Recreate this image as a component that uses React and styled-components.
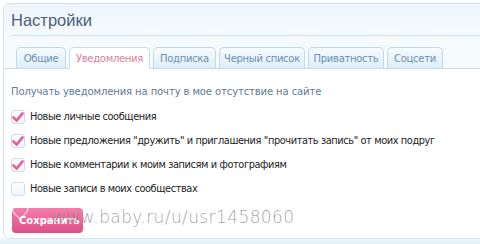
import React, { useState } from 'react';
import styled, { createGlobalStyle } from 'styled-components';

const GlobalStyle = createGlobalStyle`
  html, body {
    margin: 0;
    padding: 0;
    background: #ffffff;
    width: 480px;
    height: 244px;
    overflow: hidden;
  }
  body {
    font-family: Tahoma, "DejaVu Sans", sans-serif;
  }
`;

const Page = styled.div`
  position: relative;
  width: 480px;
  height: 244px;
  padding: 3px 0 0 3px;
  box-sizing: border-box;
  background: linear-gradient(to bottom, #ffffff 0, #ffffff 237px, #e4f1f9 241px);
`;

const Card = styled.div`
  width: 500px;
  height: 236px;
  box-sizing: border-box;
  border: 1px solid #d3e5f1;
  border-radius: 6px;
  background: #ffffff;
  overflow: hidden;
`;

const Header = styled.div`
  background: linear-gradient(to bottom, #eef6fc, #f5fafd);
  padding: 0 0 0 7px;
`;

const Title = styled.h1`
  margin: 0;
  height: 32px;
  box-sizing: border-box;
  padding-top: 7px;
  border-bottom: 1px solid #d5e6f2;
  font-family: "Liberation Sans", Arial, sans-serif;
  font-weight: normal;
  font-size: 16.5px;
  color: #4b5e7c;
`;

const TabBar = styled.div`
  display: flex;
  gap: 3px;
  padding: 11px 0 0 12px;
  border-bottom: 1px solid #c7dceb;
  background: linear-gradient(to bottom, #f5fafd, #f7fbfe);
`;

const Tab = styled.button`
  width: ${({ $w }) => $w}px;
  height: 22px;
  margin-bottom: -1px;
  padding: 0;
  border: 1px solid ${({ $active }) => ($active ? '#c7dceb' : '#c2d8e8')};
  border-bottom-color: ${({ $active }) => ($active ? '#ffffff' : '#c7dceb')};
  border-radius: 5px 5px 0 0;
  background: ${({ $active }) =>
    $active ? '#ffffff' : 'linear-gradient(to bottom, #f6fbfe, #ddeef9)'};
  color: ${({ $active }) => ($active ? '#de7f9d' : '#6f8fae')};
  font-family: "DejaVu Sans", sans-serif;
  font-size: 10px;
  letter-spacing: -0.3px;
  text-align: center;
  cursor: pointer;
`;

const Body = styled.div`
  padding: 17px 0 0 7px;
`;

const Lead = styled.p`
  margin: 0 0 11px 0;
  font-family: "DejaVu Sans", sans-serif;
  font-size: 10px;
  color: #5d7a98;
  letter-spacing: -0.1px;
`;

const OptionList = styled.div`
  display: flex;
  flex-direction: column;
  gap: 7px;
`;

const Option = styled.label`
  display: flex;
  align-items: center;
  gap: 5px;
  height: 17px;
  font-family: "DejaVu Sans", sans-serif;
  font-size: 9.8px;
  color: #222222;
  letter-spacing: -0.4px;
  cursor: pointer;
`;

const Box = styled.span`
  display: flex;
  align-items: center;
  justify-content: center;
  width: 14px;
  height: 14px;
  box-sizing: border-box;
  border: 1px solid #cfdbe7;
  border-radius: 3px;
  background: linear-gradient(to bottom, #ffffff, #f1f5f9);
`;

const SaveButton = styled.button`
  margin: 11px 0 0 1px;
  width: 71px;
  height: 25px;
  border: none;
  border-radius: 4px;
  background: linear-gradient(to bottom, #f27fab, #df4f86);
  color: #ffffff;
  font-family: "DejaVu Sans", sans-serif;
  font-weight: bold;
  font-size: 10px;
  text-align: left;
  padding-left: 7px;
  cursor: pointer;
`;

const Watermark = styled.div`
  position: absolute;
  left: 52px;
  top: 207px;
  font-family: "DejaVu Sans", sans-serif;
  font-weight: 200;
  font-size: 17px;
  letter-spacing: 0.4px;
  color: rgba(140, 140, 140, 0.8);
  pointer-events: none;
  white-space: nowrap;
`;

const Heart = styled.svg`
  position: absolute;
  left: 10px;
  top: 199px;
  pointer-events: none;
`;

const Check = () => (
  <svg width="12" height="10" viewBox="0 0 13 11">
    <path
      d="M1.5 6 L5 9.5 L11.5 1.5"
      fill="none"
      stroke="#e55c96"
      strokeWidth="2.8"
      strokeLinecap="round"
      strokeLinejoin="round"
    />
  </svg>
);

const tabs = [
  { label: 'Общие', w: 50 },
  { label: 'Уведомления', w: 81 },
  { label: 'Подписка', w: 63 },
  { label: 'Черный список', w: 86 },
  { label: 'Приватность', w: 76 },
  { label: 'Соцсети', w: 56 },
];

const options = [
  { label: 'Новые личные сообщения', on: true },
  { label: 'Новые предложения "дружить" и приглашения "прочитать запись" от моих подруг', on: true },
  { label: 'Новые комментарии к моим записям и фотографиям', on: true },
  { label: 'Новые записи в моих сообществах', on: false },
];

const App = () => {
  const [active, setActive] = useState(1);
  const [checked, setChecked] = useState(options.map((o) => o.on));

  const toggle = (i) =>
    setChecked((prev) => prev.map((v, j) => (j === i ? !v : v)));

  return (
    <>
      <GlobalStyle />
      <Page>
        <Card>
          <Header>
            <Title>Настройки</Title>
          </Header>
          <TabBar>
            {tabs.map((t, i) => (
              <Tab
                key={t.label}
                $w={t.w}
                $active={i === active}
                onClick={() => setActive(i)}
              >
                {t.label}
              </Tab>
            ))}
          </TabBar>
          <Body>
            <Lead>Получать уведомления на почту в мое отсутствие на сайте</Lead>
            <OptionList>
              {options.map((o, i) => (
                <Option key={o.label} onClick={() => toggle(i)}>
                  <Box>{checked[i] && <Check />}</Box>
                  {o.label}
                </Option>
              ))}
            </OptionList>
            <SaveButton>Сохранить</SaveButton>
          </Body>
        </Card>
        <Heart width="20" height="22" viewBox="0 0 22 24">
          <path
            d="M11 22 C4 16 1 12 2 7 C3 3 8 2 11 6 C14 2 19 3 20 7 C21 12 18 16 11 22 Z"
            fill="none"
            stroke="rgba(255,255,255,0.6)"
            strokeWidth="1.5"
          />
        </Heart>
        <Watermark>www.baby.ru/u/usr1458060</Watermark>
      </Page>
    </>
  );
};

export default App;
